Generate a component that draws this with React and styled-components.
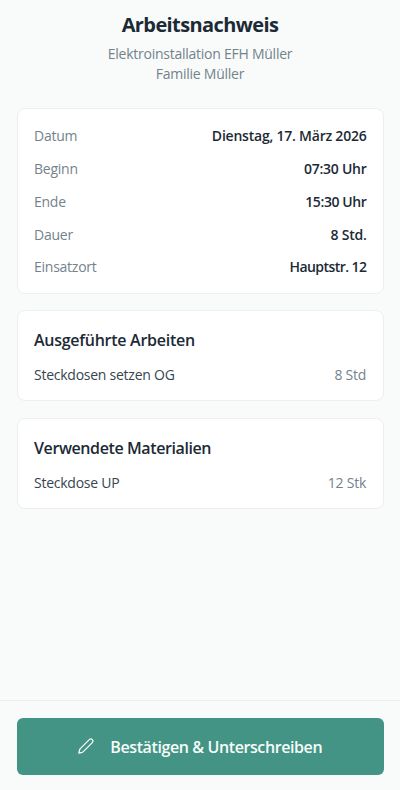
import React from 'react';
import styled, { createGlobalStyle } from 'styled-components';

const colors = {
  page: '#f9fbfa',
  card: '#ffffff',
  border: '#eceff0',
  heading: '#1c2a35',
  text: '#36454f',
  muted: '#74828c',
  primary: '#439484',
};

const GlobalStyle = createGlobalStyle`
  *,
  *:before,
  *:after {
    box-sizing: border-box;
  }
  body {
    margin: 0;
    background: ${colors.page};
    font-family: 'Open Sans', 'Noto Sans', sans-serif;
    font-size: 14px;
    line-height: 20.5px;
    letter-spacing: -0.25px;
  }
`;

const Page = styled.div`
  display: flex;
  flex-direction: column;
  height: 790px;
  overflow: hidden;
  background: ${colors.page};
`;
const Header = styled.header`
  padding: 10px 17px 0;
  text-align: center;
`;
const Title = styled.h1`
  margin: 0 0 5px;
  color: ${colors.heading};
  font-size: 20px;
  font-weight: 700;
  line-height: 29px;
  letter-spacing: -0.6px;
`;
const Subtitle = styled.p`
  margin: 0;
  color: ${colors.muted};
  line-height: 20px;
`;
const Content = styled.main`
  flex: 1;
  display: flex;
  flex-direction: column;
  gap: 16.5px;
  padding: 23.5px 16.5px 0;
`;
const Card = styled.section`
  padding: ${({ $padding }) => $padding};
  background: ${colors.card};
  border: 1px solid ${colors.border};
  border-radius: 8px;
`;
const CardTitle = styled.h2`
  margin: 0 0 12px;
  color: ${colors.heading};
  font-size: 16px;
  font-weight: 600;
  line-height: 25px;
  letter-spacing: ${({ $tracking }) => $tracking};
`;
const Rows = styled.div`
  display: flex;
  flex-direction: column;
  gap: 12.3px;
`;
const Row = styled.div`
  display: flex;
  justify-content: space-between;
`;
const Label = styled.span`
  color: ${colors.muted};
`;
const Value = styled.span`
  margin-right: -0.5px;
  color: ${colors.heading};
  font-weight: 600;
  letter-spacing: ${({ $tracking }) => $tracking};
`;
const Item = styled.span`
  color: ${colors.text};
`;
const Footer = styled.footer`
  padding: 16.5px 16.5px 15px;
  border-top: 1px solid ${colors.border};
`;
const Button = styled.button`
  display: flex;
  align-items: center;
  justify-content: center;
  gap: 16.5px;
  width: 100%;
  height: 57.5px;
  padding: 2px 0 0;
  border: 0;
  border-radius: 6px;
  background: ${colors.primary};
  color: #f7fcfa;
  font-family: inherit;
  font-size: 16px;
  font-weight: 600;
  letter-spacing: -0.4px;
`;
const Pencil = styled.svg`
  flex: none;
  width: 16px;
  height: 16px;
  margin-bottom: 3px;
  fill: none;
  stroke: currentColor;
  stroke-width: 1.3;
  stroke-linecap: round;
  stroke-linejoin: round;
`;

const PencilIcon = () => (
  <Pencil viewBox="0 0 16 16" aria-hidden="true">
    <path d="M11.3 1.6a2.12 2.12 0 0 1 3 3L5.3 13.6Q4.8 14.1 4.1 14.3L.9 15L1.6 11.8Q1.8 11.1 2.3 10.6Z" />
  </Pencil>
);

const details = [
  { label: 'Datum', value: 'Dienstag, 17. März 2026', tracking: '-0.22px' },
  { label: 'Beginn', value: '07:30 Uhr', tracking: '-0.25px' },
  { label: 'Ende', value: '15:30 Uhr', tracking: '-0.4px' },
  { label: 'Dauer', value: '8 Std.', tracking: '-0.25px' },
  { label: 'Einsatzort', value: 'Hauptstr. 12', tracking: '-0.55px' },
];

const sections = [
  { title: 'Ausgeführte Arbeiten', tracking: '-0.27px', name: 'Steckdosen setzen OG', amount: '8 Std' },
  { title: 'Verwendete Materialien', tracking: '-0.4px', name: 'Steckdose UP', amount: '12 Stk' },
];

const App = () => (
  <>
    <GlobalStyle />
    <Page>
      <Header>
        <Title>Arbeitsnachweis</Title>
        <Subtitle>Elektroinstallation EFH Müller</Subtitle>
        <Subtitle>Familie Müller</Subtitle>
      </Header>
      <Content>
        <Card $padding="17.8px 16.5px 15px">
          <Rows>
            {details.map(({ label, value, tracking }) => (
              <Row key={label}>
                <Label>{label}</Label>
                <Value $tracking={tracking}>{value}</Value>
              </Row>
            ))}
          </Rows>
        </Card>
        {sections.map(({ title, tracking, name, amount }) => (
          <Card key={title} $padding="16.9px 16.5px 14.6px">
            <CardTitle $tracking={tracking}>{title}</CardTitle>
            <Row>
              <Item>{name}</Item>
              <Label>{amount}</Label>
            </Row>
          </Card>
        ))}
      </Content>
      <Footer>
        <Button type="button">
          <PencilIcon />
          <span>Bestätigen &amp; Unterschreiben</span>
        </Button>
      </Footer>
    </Page>
  </>
);

export default App;
